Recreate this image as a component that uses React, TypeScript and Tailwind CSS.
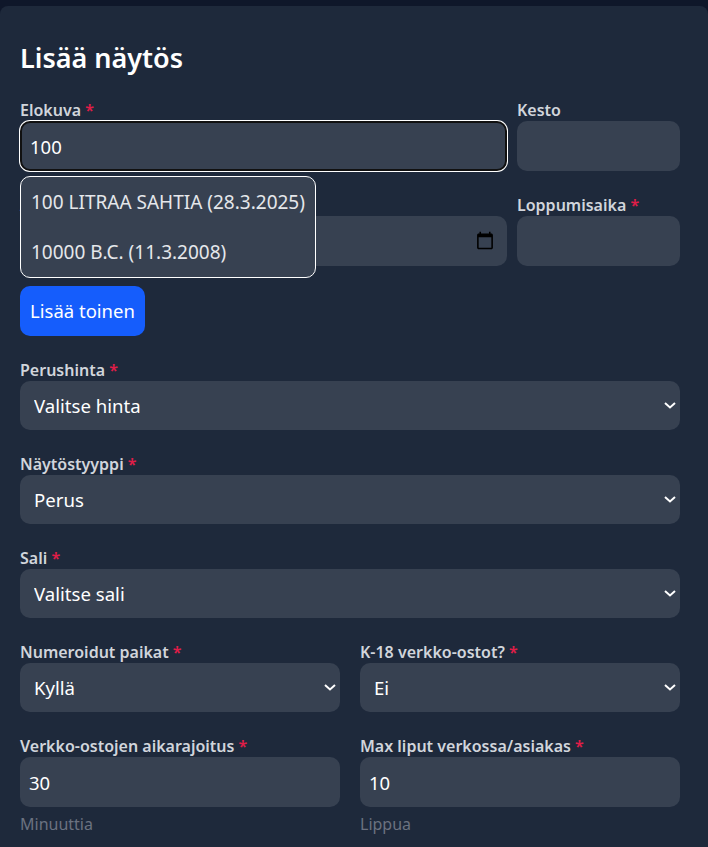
import React from "react"

function Label({ text, required }: { text: string; required?: boolean }) {
  return (
    <label className="block h-[21px] text-[16px] leading-[21px] font-semibold text-[#d1d5db] whitespace-nowrap">
      {text}
      {required && <span className="text-[#e11d48]"> *</span>}
    </label>
  )
}

const inputClass = "block w-full h-[50px] rounded-[10px] bg-[#374151] pl-[9px] pr-2.5 text-[18.5px] text-white outline-none"
const selectClass = "block w-full h-[49px] appearance-none rounded-[10px] bg-[#374151] pl-3.5 pt-px text-[18.6px] text-white outline-none"

function SelectField({ label, value }: { label: string; value: string }) {
  return (
    <div>
      <Label text={label} required />
      <div className="relative">
        <select className={selectClass} defaultValue={value}>
          <option>{value}</option>
        </select>
        <svg className="absolute right-[4px] top-[21px] h-[7px] w-[12px] pointer-events-none" viewBox="0 0 12 7" fill="none" stroke="white" strokeWidth="2">
          <path d="M1 1l5 4.5L11 1" />
        </svg>
      </div>
    </div>
  )
}

export default function App() {
  return (
    <div className="h-[847px] overflow-hidden bg-[#0f172a] pt-[6px] font-['Noto_Sans',sans-serif]">
      <div className="h-full rounded-t-lg bg-[#1e293b] pl-5 pr-7 pt-[30px]">
        <h1 className="h-[44px] text-[27px] leading-[44px] font-semibold text-white">Lisää näytös</h1>

        <div className="relative mt-5">
          <div className="grid grid-cols-[487px_1fr] gap-x-2.5">
            <div>
              <Label text="Elokuva" required />
              <input className="block w-full h-[50px] rounded-[10px] border-2 border-[#111] bg-[#374151] pl-2 text-[18.5px] text-white outline-none shadow-[0_0_0_1px_#fff]" defaultValue="100" />
            </div>
            <div>
              <Label text="Kesto" />
              <input className={inputClass} />
            </div>
          </div>

          <div className="mt-6 grid grid-cols-[487px_1fr] gap-x-2.5">
            <div>
              <Label text="Alkamisaika" required />
              <input type="datetime-local" className={inputClass + " pr-3 [&::-webkit-calendar-picker-indicator]:m-0 [&::-webkit-calendar-picker-indicator]:p-0 [&::-webkit-calendar-picker-indicator]:w-5 [&::-webkit-calendar-picker-indicator]:h-5"} />
            </div>
            <div>
              <Label text="Loppumisaika" required />
              <input className={inputClass} />
            </div>
          </div>

          {/* hakutulokset */}
          <div className="absolute left-0 top-[76px] w-[296px] h-[102px] rounded-[10px] border border-white bg-[#374151] text-[#e5e7eb] text-[19px]">
            <div className="h-[50px] pl-2.5 leading-[50px] whitespace-nowrap">100 LITRAA SAHTIA (28.3.2025)</div>
            <div className="h-[50px] pl-2.5 leading-[50px] whitespace-nowrap">10000 B.C. (11.3.2008)</div>
          </div>
        </div>

        <button className="mt-5 block h-[50px] w-[125px] rounded-[10px] bg-[#155dfc] text-[18.5px] text-white">Lisää toinen</button>

        <div className="mt-[24px] flex flex-col gap-[24px]">
          <SelectField label="Perushinta" value="Valitse hinta" />
          <SelectField label="Näytöstyyppi" value="Perus" />
          <SelectField label="Sali" value="Valitse sali" />
        </div>

        <div className="mt-[24px] grid grid-cols-2 gap-x-5">
          <SelectField label="Numeroidut paikat" value="Kyllä" />
          <SelectField label="K-18 verkko-ostot?" value="Ei" />
        </div>

        <div className="mt-[24px] grid grid-cols-2 gap-x-5">
          <div>
            <Label text="Verkko-ostojen aikarajoitus" required />
            <input className={inputClass} defaultValue="30" />
            <p className="mt-[5px] text-[16px] text-[#6b7280]">Minuuttia</p>
          </div>
          <div>
            <Label text="Max liput verkossa/asiakas" required />
            <input className={inputClass} defaultValue="10" />
            <p className="mt-[5px] text-[16px] text-[#6b7280]">Lippua</p>
          </div>
        </div>
      </div>
    </div>
  )
}
